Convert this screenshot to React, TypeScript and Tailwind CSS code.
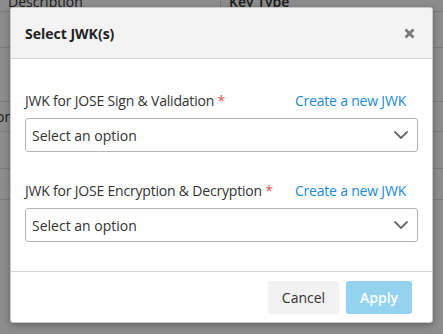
import { ChevronDown } from 'lucide-react';

const fields = [
  { label: 'JWK for JOSE Sign & Validation' },
  { label: 'JWK for JOSE Encryption & Decryption' },
];

function SelectBox() {
  return (
    <div className="flex h-[34px] items-center justify-between rounded-[3px] border border-[#b5b5b5] bg-white pl-[6px] pr-[4px]">
      <span className="text-[14px] text-[#333]">Select an option</span>
      <ChevronDown size={24} strokeWidth={1.8} className="text-[#6b6b6b]" />
    </div>
  );
}

export default function App() {
  return (
    <div
      className="relative h-[334px] w-[443px] overflow-hidden bg-white"
      style={{ fontFamily: '"Open Sans", "Noto Sans", sans-serif' }}
    >
      {/* page behind the modal */}
      <div className="grid grid-cols-[221px_1fr] text-[14px] text-[#333]">
        <div className="h-[12px] border-b border-r border-[#ddd] px-2 leading-[4px]">Description</div>
        <div className="h-[12px] border-b border-[#ddd] px-2 leading-[4px] font-semibold">Key Type</div>
        <div className="h-[36px] border-b border-r border-[#ddd]" />
        <div className="h-[36px] border-b border-[#ddd]" />
        <div className="h-[54px] border-b border-r border-[#ddd]" />
        <div className="h-[54px] border-b border-[#ddd]" />
        <div className="flex h-[30px] items-center border-b border-r border-[#ddd]">
          <span className="-ml-[32px]">Option</span>
        </div>
        <div className="h-[30px] border-b border-[#ddd]" />
        <div className="h-[37px] border-b border-r border-[#ddd]" />
        <div className="h-[37px] border-b border-[#ddd]" />
        <div className="h-[31px] border-b border-r border-[#ddd]" />
        <div className="h-[31px] border-b border-[#ddd]" />
      </div>

      {/* overlay */}
      <div className="absolute inset-0 bg-[#000]/45" />

      {/* modal */}
      <div className="absolute left-[10px] top-[7px] flex w-[423px] flex-col overflow-hidden rounded-[3px] border border-[#c8c8c8] bg-white shadow-[0_2px_6px_rgba(0,0,0,0.3)]">
        <div className="flex h-[51px] items-center justify-between border-b border-[#d2d2d2] bg-[#f3f3f3] pl-[14px] pr-[17px]">
          <h2 className="text-[14px] font-bold text-[#222]">Select JWK(s)</h2>
          <svg width="11" height="11" viewBox="0 0 11 11" className="text-[#777]">
            <path d="M1.5 1.5 L9.5 9.5 M9.5 1.5 L1.5 9.5" stroke="currentColor" strokeWidth="2.6" strokeLinecap="butt" />
          </svg>
        </div>

        <div className="flex flex-col gap-[29px] px-[14px] pb-[29px] pt-[32px]">
          {fields.map((f) => (
            <div key={f.label} className="flex flex-col gap-[7px]">
              <div className="flex items-center justify-between pr-[12px] text-[14px] leading-[20px] tracking-[-0.2px]">
                <span className="text-[#333]">
                  {f.label} <span className="text-[#e5534b]">*</span>
                </span>
                <a className="text-[#1a8ad6]">Create a new JWK</a>
              </div>
              <SelectBox />
            </div>
          ))}
        </div>

        <div className="flex h-[51px] items-center justify-end gap-[7px] border-t border-[#d2d2d2] pr-[20px]">
          <button className="h-[33px] w-[71px] rounded-[3px] bg-[#f2f2f2] text-[14px] text-[#333]">Cancel</button>
          <button className="h-[33px] w-[66px] rounded-[3px] bg-[#93d3ef] text-[14px] font-semibold text-white">Apply</button>
        </div>
      </div>
    </div>
  );
}
